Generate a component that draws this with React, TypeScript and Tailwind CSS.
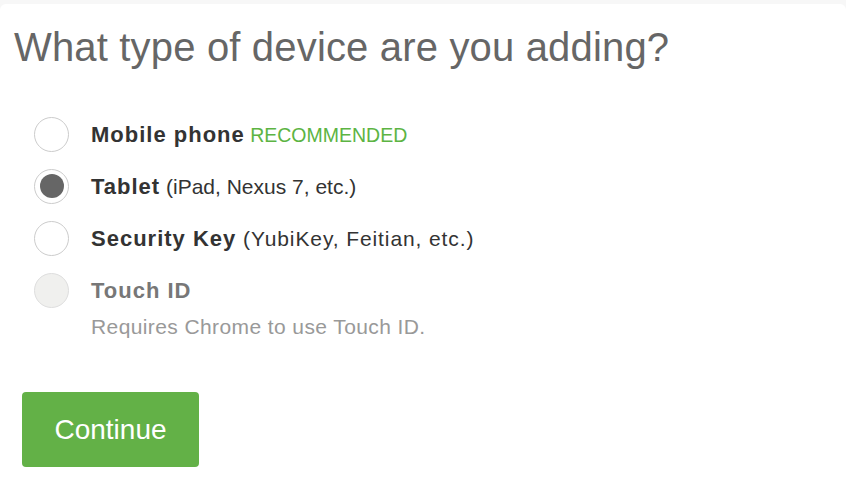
const font = { fontFamily: '"Liberation Sans", Arial, Helvetica, sans-serif' }

type Option = {
  name: string
  detail?: string
  badge?: string
  checked?: boolean
  disabled?: boolean
  wide?: boolean
}

const options: Option[] = [
  { name: 'Mobile phone', badge: 'RECOMMENDED' },
  { name: 'Tablet', detail: '(iPad, Nexus 7, etc.)', checked: true },
  { name: 'Security Key', detail: '(YubiKey, Feitian, etc.)', wide: true },
  { name: 'Touch ID', disabled: true },
]

function Radio({ checked, disabled }: { checked?: boolean; disabled?: boolean }) {
  if (disabled) {
    return <span className="w-[35px] h-[35px] rounded-full border-[1.5px] border-[#dedede] bg-[#f0f0ee] shrink-0" />
  }
  return (
    <span className="w-[35px] h-[35px] rounded-full border-[1.5px] border-[#cccccc] bg-white shrink-0 flex items-center justify-center">
      {checked && <span className="w-[24px] h-[24px] rounded-full bg-[#666666]" />}
    </span>
  )
}

export default function App() {
  return (
    <div className="min-h-screen bg-[#f7f7f7] pt-[4px]" style={font}>
      <div className="bg-white rounded-t-[6px] min-h-[488px] pl-[14px] pt-[19px]">
        <h1 className="text-[40px] leading-[48px] text-[#666666] tracking-[0.17px]">
          What type of device are you adding?
        </h1>

        <ul className="mt-[37px] ml-[20px]">
          {options.map((o) => (
            <li key={o.name} className="h-[52px] flex items-center gap-[22px]">
              <Radio checked={o.checked} disabled={o.disabled} />
              <span className={`text-[21px] ${o.disabled ? 'text-[#777777]' : 'text-[#333333]'}`}>
                <b className="font-bold text-[22px] tracking-[1px]">{o.name}</b>
                {o.detail && <span className={o.wide ? 'tracking-[0.9px]' : ''}> {o.detail}</span>}
                {o.badge && <span className="text-[19.5px] text-[#5cb443]"> {o.badge}</span>}
              </span>
            </li>
          ))}
        </ul>

        <p className="ml-[77px] mt-[-1px] text-[21px] leading-[24px] text-[#999999] tracking-[0.4px]">
          Requires Chrome to use Touch ID.
        </p>

        <button className="ml-[8px] mt-[53px] w-[177px] h-[75px] rounded-[4px] bg-[#63b147] text-white text-[28px]">
          Continue
        </button>
      </div>
    </div>
  )
}
